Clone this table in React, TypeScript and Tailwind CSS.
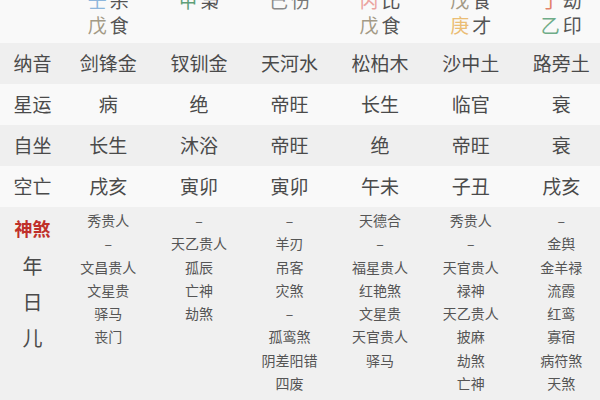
import React from "react";

const cols = "grid grid-cols-[63px_repeat(6,90.6px)]";

type Seg = { s: string; c: string };
const top1: (Seg[] | null)[] = [
  [{ s: "壬", c: "text-[#8db6dc]" }, { s: "杀", c: "text-[#555]" }],
  [{ s: "甲", c: "text-[#5f9f78]" }, { s: "枭", c: "text-[#555]" }],
  [{ s: "己", c: "text-[#8a8a8a]" }, { s: "伤", c: "text-[#777]" }],
  [{ s: "丙", c: "text-[#eba4a0]" }, { s: "比", c: "text-[#555]" }],
  [{ s: "戊", c: "text-[#a39a86]" }, { s: "食", c: "text-[#555]" }],
  [{ s: "丁", c: "text-[#e3826a]" }, { s: "劫", c: "text-[#555]" }],
];
const top2: (Seg[] | null)[] = [
  [{ s: "戊", c: "text-[#a39a86]" }, { s: "食", c: "text-[#555]" }],
  null,
  null,
  [{ s: "戊", c: "text-[#a39a86]" }, { s: "食", c: "text-[#555]" }],
  [{ s: "庚", c: "text-[#ebbd74]" }, { s: "才", c: "text-[#555]" }],
  [{ s: "乙", c: "text-[#6fac88]" }, { s: "印", c: "text-[#555]" }],
];

const rows: { label: string; vals: string[]; bg: string }[] = [
  { label: "纳音", vals: ["剑锋金", "钗钏金", "天河水", "松柏木", "沙中土", "路旁土"], bg: "bg-[#efefef]" },
  { label: "星运", vals: ["病", "绝", "帝旺", "长生", "临官", "衰"], bg: "bg-[#f9f9f9]" },
  { label: "自坐", vals: ["长生", "沐浴", "帝旺", "绝", "帝旺", "衰"], bg: "bg-[#efefef]" },
  { label: "空亡", vals: ["戌亥", "寅卯", "寅卯", "午未", "子丑", "戌亥"], bg: "bg-[#f9f9f9]" },
];

const shensha: string[][] = [
  ["秀贵人", "–", "文昌贵人", "文星贵", "驿马", "丧门"],
  ["–", "天乙贵人", "孤辰", "亡神", "劫煞"],
  ["–", "羊刃", "吊客", "灾煞", "–", "孤鸾煞", "阴差阳错", "四废"],
  ["天德合", "–", "福星贵人", "红艳煞", "文星贵", "天官贵人", "驿马"],
  ["秀贵人", "–", "天官贵人", "禄神", "天乙贵人", "披麻", "劫煞", "亡神"],
  ["–", "金舆", "金羊禄", "流霞", "红鸾", "寡宿", "病符煞", "天煞"],
];

function Pair({ segs }: { segs: Seg[] | null }) {
  if (!segs) return <div className="h-[25px]" />;
  return (
    <div className="h-[25px] leading-[25px] flex justify-center gap-[3px] text-[19px]">
      {segs.map((x, i) => (
        <span key={i} className={x.c}>
          {x.s}
        </span>
      ))}
    </div>
  );
}

export default function App() {
  return (
    <div
      className="w-[600px] h-[400px] overflow-hidden bg-[#f9f9f9] text-[#4a4a4a]"
      style={{ fontFamily: '"Noto Sans CJK SC", "Noto Sans", sans-serif' }}
    >
      <div className="w-[607px]">
        <div className="h-[43px] flex flex-col justify-end pb-[6px] bg-[#f9f9f9]">
          <div className={cols}>
            <div />
            {top1.map((s, i) => (
              <Pair key={i} segs={s} />
            ))}
          </div>
          <div className={cols}>
            <div />
            {top2.map((s, i) => (
              <Pair key={i} segs={s} />
            ))}
          </div>
        </div>
        {rows.map((r) => (
          <div key={r.label} className={`${cols} ${r.bg} h-[41px] items-center text-[19px]`}>
            <div className="text-center pl-[2px]">{r.label}</div>
            {r.vals.map((v, i) => (
              <div key={i} className="text-center">
                {v}
              </div>
            ))}
          </div>
        ))}
        <div className={`${cols} bg-[#f0f0f0] h-[200px] pt-[2px]`}>
          <div className="flex flex-col items-center pl-[2px]">
            <div className="text-[18px] font-bold text-[#c0302a] leading-[22px] mt-[8px]">神煞</div>
            <div className="text-[20px] leading-[36px] mt-[9px]">年</div>
            <div className="text-[20px] leading-[36px]">日</div>
            <div className="text-[20px] leading-[36px]">儿</div>
          </div>
          {shensha.map((c, i) => (
            <div key={i} className="flex flex-col items-center text-[14px] leading-[23.3px] text-[#555]">
              {c.map((t, j) => (
                <div key={j}>{t}</div>
              ))}
            </div>
          ))}
        </div>
      </div>
    </div>
  );
}
